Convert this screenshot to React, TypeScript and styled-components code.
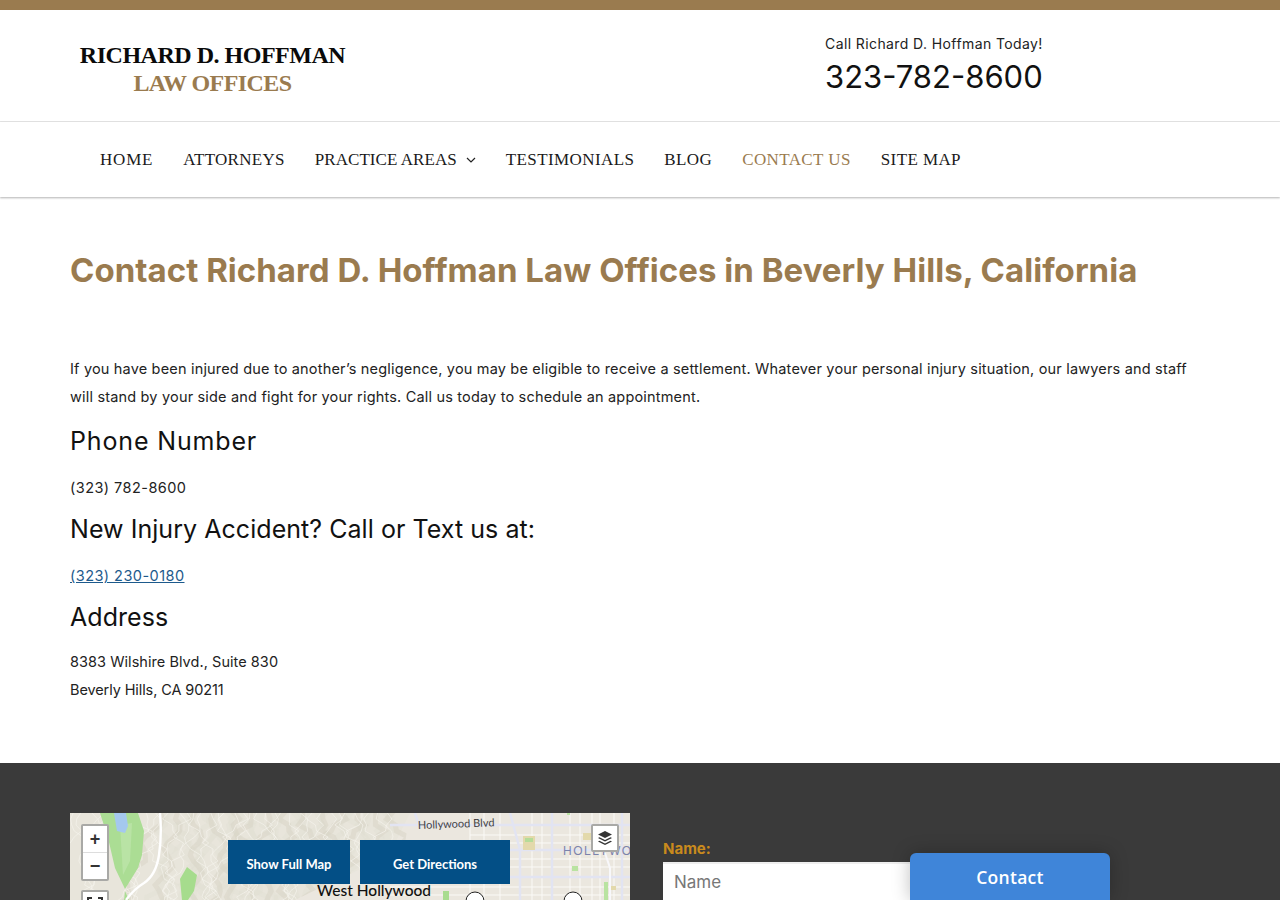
import React from 'react'
import styled, { createGlobalStyle } from 'styled-components'

const GlobalStyle = createGlobalStyle`
  html, body {
    margin: 0;
    padding: 0;
    height: 900px;
    overflow: hidden;
    background: #fff;
  }
  body {
    font-family: 'Inter', 'Open Sans', sans-serif;
    color: #111;
  }
`

const Page = styled.div`
  position: relative;
  width: 1280px;
  height: 900px;
  overflow: hidden;
`
const TopBar = styled.div`
  height: 10px;
  background: #9a7b4f;
`
const Header = styled.header`
  display: flex;
  height: 111px;
  padding-left: 79px;
  border-bottom: 1px solid #e5e5e5;
`
const Logo = styled.div`
  width: 746px;
  padding-top: 31px;
  font-family: 'Liberation Serif', serif;
  font-weight: 700;
  font-size: 24px;
  line-height: 28px;
`
const LogoName = styled.div`
  width: 267px;
  text-align: center;
  color: #0a0a0a;
  white-space: nowrap;
  letter-spacing: -0.48px;
`
const LogoSub = styled(LogoName)`
  color: #9a7b4f;
  letter-spacing: -0.55px;
`
const CallBox = styled.div`
  padding-top: 25px;
`
const CallLabel = styled.div`
  font-size: 14px;
  line-height: 18px;
  letter-spacing: 0.4px;
  color: #222;
`
const CallNumber = styled.div`
  margin-top: 5px;
  font-size: 31px;
  line-height: 38px;
  color: #111;
`
const Nav = styled.nav`
  display: flex;
  align-items: center;
  gap: 30px;
  height: 75px;
  padding-left: 100px;
  box-shadow: 0 1px 2px rgba(0, 0, 0, 0.3);
`
const NavItem = styled.a<{ $active?: boolean; $spacing?: number }>`
  display: flex;
  align-items: center;
  gap: 9px;
  font-family: 'Liberation Serif', serif;
  font-size: 17px;
  letter-spacing: ${(p) => p.$spacing ?? 0.4}px;
  color: ${(p) => (p.$active ? '#9a7b4f' : '#1a1a1a')};
`
const Main = styled.main`
  height: 566px;
  padding: 0 70px;
  box-sizing: border-box;
`
const Title = styled.h1`
  margin: 0;
  padding-top: 52px;
  font-size: 33px;
  line-height: 42px;
  font-weight: 700;
  letter-spacing: 0.03px;
  color: #9a7b4f;
  white-space: nowrap;
`
const Intro = styled.p`
  margin: 64px 0 0;
  width: 1130px;
  font-size: 14.5px;
  line-height: 28px;
  letter-spacing: 0.18px;
  color: #222;
`
const SubHeading = styled.h2<{ $spacing?: number; $first?: boolean }>`
  margin: ${(p) => (p.$first ? 14 : 11)}px 0 0;
  font-size: 25px;
  line-height: 32px;
  font-weight: 400;
  letter-spacing: ${(p) => p.$spacing ?? 0.05}px;
  color: #111;
`
const Line = styled.p<{ $spacing?: number }>`
  margin: 0;
  font-size: 14.5px;
  line-height: 28px;
  letter-spacing: ${(p) => p.$spacing ?? 0}px;
  color: #222;
`
const Block = styled.div`
  margin-top: 17px;
`
const AddressBlock = styled(Block)`
  margin-top: 15px;
`
const PhoneLink = styled.a`
  color: #1d5a8c;
  text-decoration: underline;
`
const Footer = styled.section`
  height: 137px;
  background: #3a3a3a;
  display: flex;
  padding: 50px 0 0 70px;
  box-sizing: border-box;
  gap: 33px;
`
const MapBox = styled.div`
  position: relative;
  width: 560px;
  height: 87px;
  background: #e9e5dc;
  overflow: hidden;
`
const MapArt = styled.svg`
  display: block;
`
const MapButton = styled.a<{ $left: number; $width: number }>`
  position: absolute;
  top: 27px;
  left: ${(p) => p.$left}px;
  width: ${(p) => p.$width}px;
  height: 44px;
  padding-top: 4px;
  box-sizing: border-box;
  display: flex;
  align-items: center;
  justify-content: center;
  background: #034f86;
  color: #fff;
  font-family: 'Lato', sans-serif;
  font-weight: 700;
  font-size: 13px;
`
const ZoomControl = styled.div`
  position: absolute;
  left: 11px;
  top: 11px;
  width: 28px;
  border: 2px solid #a9a9a6;
  border-radius: 2px;
  box-sizing: border-box;
  background: #fff;
`
const ZoomButton = styled.div`
  height: 26px;
  display: flex;
  align-items: center;
  justify-content: center;
  font: 700 18px 'Liberation Sans', sans-serif;
  color: #333;
  & + & {
    border-top: 1px solid #ddd;
  }
`
const FullscreenControl = styled(ZoomControl)`
  top: 77px;
  height: 30px;
  display: flex;
  justify-content: center;
  padding-top: 5px;
`
const LayerControl = styled.div`
  position: absolute;
  left: 521px;
  top: 11px;
  width: 28px;
  height: 28px;
  border: 2px solid #a9a9a6;
  border-radius: 2px;
  box-sizing: border-box;
  background: #fff;
  display: flex;
  align-items: center;
  justify-content: center;
`
const FormColumn = styled.div`
  width: 400px;
  padding-top: 27px;
`
const FieldLabel = styled.div`
  font-size: 15px;
  line-height: 18px;
  font-weight: 700;
  color: #c98a1d;
`
const NameInput = styled.div`
  margin-top: 4px;
  height: 40px;
  padding: 0 11px 3px;
  box-sizing: border-box;
  display: flex;
  align-items: center;
  background: #fff;
  border-top: 2px solid #eee;
  font-size: 17px;
  color: #777;
`
const ContactTab = styled.div`
  position: absolute;
  left: 910px;
  top: 853px;
  width: 200px;
  height: 47px;
  border-radius: 6px 6px 0 0;
  background: #3f85d9;
  box-shadow: 0 0 18px rgba(0, 0, 0, 0.25);
  display: flex;
  align-items: center;
  justify-content: center;
  color: #fff;
  font-family: 'Open Sans', sans-serif;
  font-weight: 600;
  font-size: 17.5px;
  letter-spacing: 0.3px;
`

// hillside contours, wiggly but the same on every render
const wiggle = (x: number, seed: number) => {
  const slope = ((seed * 7) % 5 - 2) * 0.22
  let d = `M${x} -2`
  for (let y = 6; y <= 92; y += 6) {
    const dx = Math.sin(y * 0.17 + seed * 1.7) * 6 + Math.sin(y * 0.53 + seed) * 3
    d += ` L${(x + dx + y * slope).toFixed(1)} ${y}`
  }
  return d
}
const ridgeSeeds = Array.from({ length: 40 }, (_, i) => i)
const minorX = [400, 414, 430, 462, 472, 500, 510, 522, 530, 544]
const minorY = [22, 30, 46, 54, 74, 82]

const MapDrawing = () => (
  <MapArt width='560' height='87' viewBox='0 0 560 87'>
    <rect width='560' height='87' fill='#ebe7df' />
    <path d='M0 0H340L325 30L300 52L260 70L225 87H0Z' fill='#e8e5db' />
    {ridgeSeeds.map((i) => (
      <path key={`r${i}`} d={wiggle(90 + i * 6, i)} fill='none' stroke='#d9d5c6' strokeWidth='5' opacity={i % 3 === 0 ? 0.55 : 0.15} />
    ))}
    {ridgeSeeds.map((i) => (
      <path key={`c${i}`} d={wiggle(4 + i * 8, i + 9)} fill='none' stroke='#f6f4ee' strokeWidth='0.8' opacity={0.8} />
    ))}
    <path d='M340 0L335 30L300 52L260 70L225 87H560V0Z' fill='#ebe7df' />
    {minorX.map((x) => (
      <path key={x} d={`M${x} 0V87`} stroke='#fbfaf7' strokeWidth='1' />
    ))}
    {minorY.map((y) => (
      <path key={y} d={`M${y < 50 ? 400 : 320} ${y}H560`} stroke='#fbfaf7' strokeWidth='1' />
    ))}
    <path d='M320 12H560M440 0L450 37V87M482 0V87M552 0V87M395 37H560M310 64H560M345 0L350 15' stroke='#e2e4f2' strokeWidth='2.4' fill='none' />
    <path d='M535 40L540 55V87' stroke='#f8f8fb' strokeWidth='2' fill='none' />
    <path d='M30 0H68L74 18L72 42L68 55L55 76L45 55L38 25Z' fill='#abdd94' />
    <path d='M50 12L62 10L60 48L53 62Z' fill='#b9e3a5' />
    <path d='M55 78L59 87H54Z' fill='#abdd94' />
    <path d='M44 0H56L58 13L55 20L47 18Z' fill='#a4c8ee' />
    <path d='M117 54L127 62L124 78L118 87H112L110 66Z' fill='#a6dc8d' />
    <path d='M90 0Q92 22 89 42Q86 62 74 70Q64 76 56 87' stroke='#fff' strokeWidth='2.4' fill='none' />
    <rect x='453' y='23' width='12' height='14' fill='#e3d9ab' />
    <rect x='455' y='25' width='8' height='4' fill='#b5dc98' />
    <rect x='513' y='20' width='10' height='7' fill='#e3d9ab' />
    <rect x='497' y='0' width='3' height='2' fill='#b9e3a1' />
    <rect x='502' y='53' width='6' height='5' fill='#b9e3a1' />
    <rect x='534' y='69' width='4' height='18' fill='#b9e3a1' />
    <rect x='541' y='73' width='5' height='4' fill='#e3d9ab' />
    <rect x='373' y='78' width='6' height='9' fill='#a9dc8f' />
    <circle cx='405' cy='88' r='9' fill='#fff' stroke='#222' />
    <circle cx='503' cy='88' r='9' fill='#fff' stroke='#222' />
    <text x='348' y='16' fontFamily='Lato, sans-serif' fontSize='11' fill='#444' transform='rotate(-2 348 16)'>Hollywood Blvd</text>
    <text x='493' y='42' fontFamily='Liberation Sans, sans-serif' fontSize='12' letterSpacing='1.5' fill='#7c83ac'>HOLLYWO</text>
    <text x='247' y='83' fontFamily='Lato, sans-serif' fontWeight='500' fontSize='15.5' fill='#111'>West Hollywood</text>
  </MapArt>
)

export default function App() {
  return (
    <Page>
      <GlobalStyle />
      <TopBar />
      <Header>
        <Logo>
          <LogoName>RICHARD D. HOFFMAN</LogoName>
          <LogoSub>LAW OFFICES</LogoSub>
        </Logo>
        <CallBox>
          <CallLabel>Call Richard D. Hoffman Today!</CallLabel>
          <CallNumber>323-782-8600</CallNumber>
        </CallBox>
      </Header>
      <Nav>
        <NavItem $spacing={0.8}>HOME</NavItem>
        <NavItem $spacing={0.3}>ATTORNEYS</NavItem>
        <NavItem $spacing={0.05}>
          PRACTICE AREAS
          <svg width='10' height='6' viewBox='0 0 10 6' fill='none' stroke='#222' strokeWidth='1.2'>
            <path d='M1 1l4 4 4-4' />
          </svg>
        </NavItem>
        <NavItem>TESTIMONIALS</NavItem>
        <NavItem>BLOG</NavItem>
        <NavItem $active>CONTACT US</NavItem>
        <NavItem>SITE MAP</NavItem>
      </Nav>
      <Main>
        <Title>Contact Richard D. Hoffman Law Offices in Beverly Hills, California</Title>
        <Intro>
          If you have been injured due to another’s negligence, you may be eligible to receive a settlement. Whatever your personal injury situation, our lawyers and staff will stand by your side and fight for your rights. Call us today to schedule an appointment.
        </Intro>
        <SubHeading $first $spacing={0.85}>Phone Number</SubHeading>
        <Block>
          <Line $spacing={0.45}>(323) 782-8600</Line>
        </Block>
        <SubHeading>New Injury Accident? Call or Text us at:</SubHeading>
        <Block>
          <Line $spacing={0.45}>
            <PhoneLink>(323) 230-0180</PhoneLink>
          </Line>
        </Block>
        <SubHeading>Address</SubHeading>
        <AddressBlock>
          <Line $spacing={0.05}>8383 Wilshire Blvd., Suite 830</Line>
          <Line $spacing={-0.1}>Beverly Hills, CA 90211</Line>
        </AddressBlock>
      </Main>
      <Footer>
        <MapBox>
          <MapDrawing />
          <ZoomControl>
            <ZoomButton>+</ZoomButton>
            <ZoomButton>−</ZoomButton>
          </ZoomControl>
          <FullscreenControl>
            <svg width='16' height='10' viewBox='0 0 16 10' fill='none' stroke='#333' strokeWidth='2'>
              <path d='M1 6V1h4M11 1h4v5' />
            </svg>
          </FullscreenControl>
          <LayerControl>
            <svg width='16' height='16' viewBox='0 0 16 16' fill='#333'>
              <path d='M8 1l7 3.500L8 8 1 4.500zM2.500 7.200L8 10l5.500-2.800L15 8l-7 3.500L1 8zM2.500 10.700L8 13.500l5.500-2.800 1.500.8L8 15 1 11.500z' />
            </svg>
          </LayerControl>
          <MapButton $left={158} $width={122}>Show Full Map</MapButton>
          <MapButton $left={290} $width={150}>Get Directions</MapButton>
        </MapBox>
        <FormColumn>
          <FieldLabel>Name:</FieldLabel>
          <NameInput>Name</NameInput>
        </FormColumn>
      </Footer>
      <ContactTab>Contact</ContactTab>
    </Page>
  )
}
